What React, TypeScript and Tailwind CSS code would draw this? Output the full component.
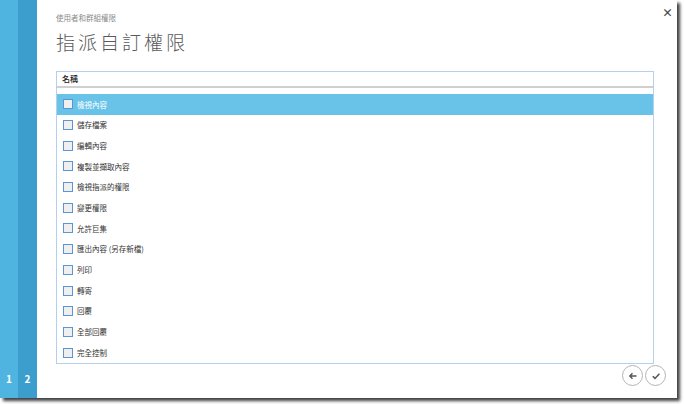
import { useState } from "react";

const PERMISSIONS = [
  "檢視內容",
  "儲存檔案",
  "編輯內容",
  "複製並擷取內容",
  "檢視指派的權限",
  "變更權限",
  "允許巨集",
  "匯出內容 (另存新檔)",
  "列印",
  "轉寄",
  "回覆",
  "全部回覆",
  "完全控制",
];

const App = () => {
  const [selected, setSelected] = useState(0);

  return (
    <div
      className="w-[684px] h-[404px] bg-white overflow-hidden"
      style={{ fontFamily: '"Noto Sans CJK TC", "Liberation Sans", sans-serif' }}
    >
      <div className="w-[677px] h-[398px] flex flex-row bg-white shadow-[3px_3px_3px_rgba(0,0,0,0.75)]">
        {/* step rail */}
        <div className="w-[18px] bg-[#50b4e0] flex flex-col justify-end items-center pb-[14px]">
          <span className="text-white text-[10px] font-bold leading-none">1</span>
        </div>
        <div className="w-[19px] bg-[#3c9ecc] flex flex-col justify-end items-center pb-[14px]">
          <span className="text-white text-[10px] font-bold leading-none">2</span>
        </div>

        {/* main panel */}
        <div className="flex-1 flex flex-col pl-[19px] pr-[23px] relative">
          <button className="absolute right-[4px] top-[7px] text-[#444] text-[11px] leading-none font-bold">
            ×
          </button>
          <p className="mt-[13px] text-[7.5px] text-[#8a8a8a] leading-[10px]">使用者和群組權限</p>
          <h1 className="mt-[7px] text-[19px] text-[#5a5a5a] font-light leading-[24px] tracking-[3px]">
            指派自訂權限
          </h1>

          <div className="mt-[17px] h-[293px] border border-[#b4cff0] flex flex-col">
            <div className="h-[16px] border-b-2 border-[#d0d0d0] flex items-center px-[5px] shrink-0">
              <span className="text-[8px] text-[#222] font-medium">名稱</span>
            </div>
            <div className="pt-[6px] flex flex-col">
              {PERMISSIONS.map((name, index) => (
                <div
                  key={index}
                  onClick={() => setSelected(index)}
                  className={
                    "h-[20.7px] flex items-center px-[6px] gap-[4px] " +
                    (index === selected ? "bg-[#69c3e9]" : "bg-white")
                  }
                >
                  <span className="w-[10px] h-[10px] border-[1.5px] border-[#5a96d4] bg-[#efefef] shrink-0" />
                  <span
                    className={
                      "text-[7.5px] leading-none " +
                      (index === selected ? "text-white" : "text-[#333]")
                    }
                  >
                    {name}
                  </span>
                </div>
              ))}
            </div>
          </div>

          <div className="flex flex-row justify-end gap-[2px] mt-[1px] -mr-[12px]">
            <button className="w-[21px] h-[21px] rounded-full border border-[#b5b5b5] flex items-center justify-center">
              <svg width="10" height="10" viewBox="0 0 10 10" fill="none" stroke="#555" strokeWidth="1.4">
                <path d="M8.5 5H2M4.5 2.2L1.8 5l2.7 2.8" />
              </svg>
            </button>
            <button className="w-[21px] h-[21px] rounded-full border border-[#b5b5b5] flex items-center justify-center">
              <svg width="10" height="10" viewBox="0 0 10 10" fill="none" stroke="#555" strokeWidth="1.5">
                <path d="M1.8 5.2l2.2 2.2 4.4-4.6" />
              </svg>
            </button>
          </div>
        </div>
      </div>
    </div>
  );
};

export default App;
